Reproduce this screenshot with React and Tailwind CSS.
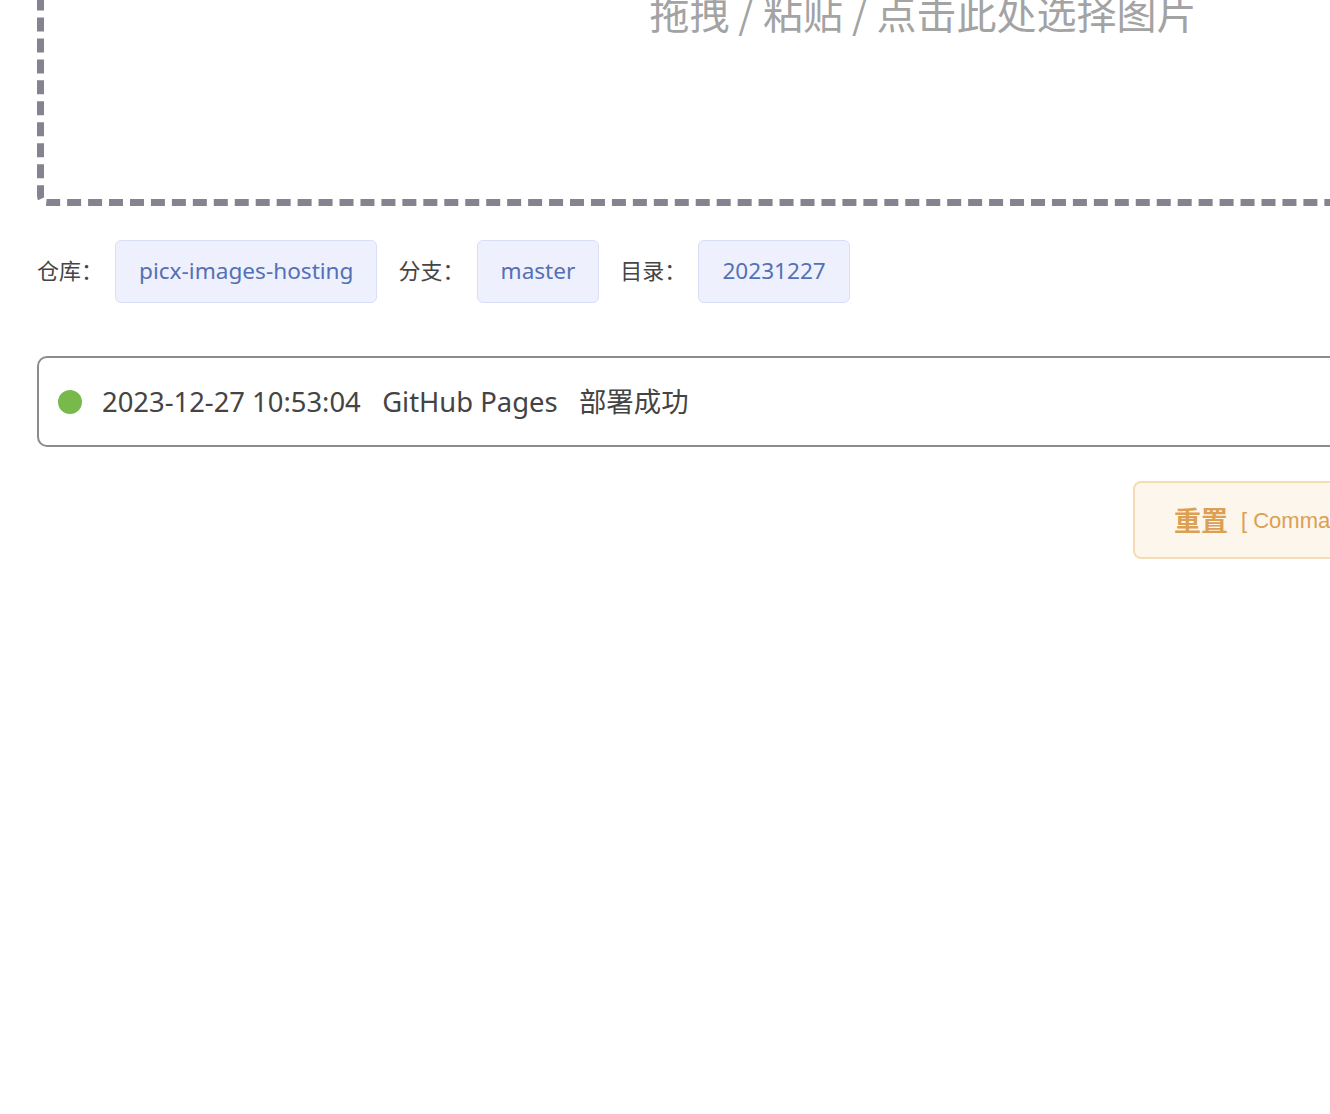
export default function App() {
  const cjk = { fontFamily: '"Noto Sans CJK SC", "Noto Sans", sans-serif' };
  const latin = { fontFamily: '"Noto Sans", "Noto Sans CJK SC", sans-serif' };
  const Tag = ({ children }) => (
    <div className="ml-[12px] h-[63px] px-[23px] pb-[2px] flex items-center rounded-[6px] border border-[#d9def8] bg-[#eef1fd] text-[22.6px] text-[#5470b5]" style={latin}>
      {children}
    </div>
  );
  const Label = ({ children, first }) => (
    <span className={first ? "text-[22px] text-[#454545] pb-[4px]" : "ml-[21px] text-[22px] text-[#454545] pb-[4px]"}>{children}</span>
  );
  return (
    <div className="w-[1330px] h-[1114px] overflow-hidden bg-white" style={cjk}>
      <div className="w-[1846px] pl-[37px]">
        <div className="w-[1772px] h-[300px] -mt-[94px] border-[7px] border-dashed border-[#85838f] rounded-[10px] flex flex-col items-center pt-[79px]">
          <div className="text-[40px] leading-[40px] text-[#a3a3a3]">拖拽 / 粘贴 / 点击此处选择图片</div>
        </div>

        <div className="mt-[34px] flex items-center">
          <Label first>仓库：</Label>
          <Tag>picx-images-hosting</Tag>
          <Label>分支：</Label>
          <Tag>master</Tag>
          <Label>目录：</Label>
          <Tag>20231227</Tag>
        </div>

        <div className="mt-[53px] w-[1772px] h-[91px] border-2 border-[#8c8c8c] rounded-[10px] flex items-center pl-[19px]">
          <span className="w-[24px] h-[24px] rounded-full bg-[#78b94c]"></span>
          <span className="ml-[20px] text-[27.4px] text-[#444444] whitespace-pre" style={latin}>2023-12-27 10:53:04   GitHub Pages   <span style={cjk}>部署成功</span></span>
        </div>

        <div className="mt-[34px] w-[1772px] flex justify-end gap-[24px]">
          <div className="w-[317px] h-[78px] px-[39px] flex items-center rounded-[8px] border-2 border-[#f5dcb3] bg-[#fdf6ec] text-[#dca052]">
            <span className="text-[27px] font-bold">重置</span>
            <span className="ml-[13px] text-[22px] whitespace-nowrap" style={{ fontFamily: '"Liberation Sans", Arial, sans-serif' }}>[ Command + R ]</span>
          </div>
          <div className="w-[335px] h-[78px] px-[39px] flex items-center rounded-[8px] border-2 border-[#b3d8ff] bg-[#ecf5ff] text-[#409eff]">
            <span className="text-[27px] font-bold">上传</span>
            <span className="ml-[13px] text-[22px] whitespace-nowrap" style={{ fontFamily: '"Liberation Sans", Arial, sans-serif' }}>[ Command + S ]</span>
          </div>
        </div>
      </div>
    </div>
  );
}
